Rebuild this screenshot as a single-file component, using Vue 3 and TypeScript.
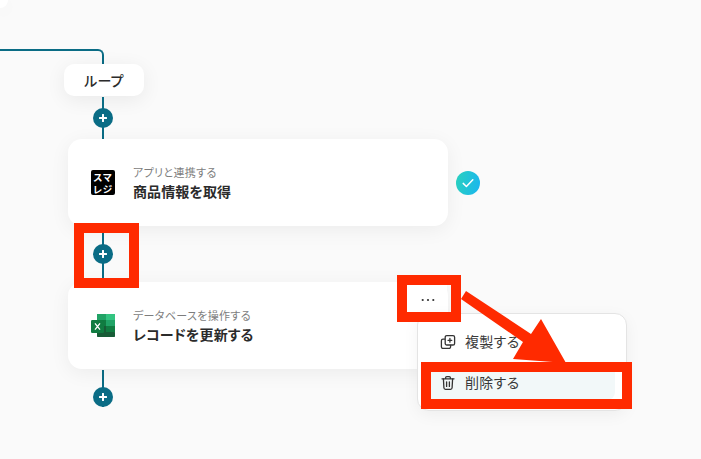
<script setup lang="ts">
interface MenuItem { label: string; icon: 'copy' | 'trash'; active: boolean }
const menuItems: MenuItem[] = [
  { label: '複製する', icon: 'copy', active: false },
  { label: '削除する', icon: 'trash', active: true },
]
</script>

<template>
  <div class="canvas">
    <div class="prev-node"></div>
    <div class="flow">
      <div class="branch"></div>
      <div class="pill">ループ</div>
      <div class="adder adder-a"><span class="plus"><svg width="8" height="8" viewBox="0 0 8 8"><path d="M4 .8v6.4M.8 4h6.4" stroke="#fff" stroke-width="2" stroke-linecap="round"/></svg></span></div>

      <div class="card">
        <div class="logo-sm"><span>スマ</span><span>レジ</span></div>
        <div class="texts">
          <div class="sub">アプリと連携する</div>
          <div class="title">商品情報を取得</div>
        </div>
        <span class="check">
          <svg width="14" height="14" viewBox="0 0 14 14"><path d="M2.2 7.4l3.2 3.1 6.4-6.8" fill="none" stroke="#fff" stroke-width="1.5" stroke-linecap="round" stroke-linejoin="round"/></svg>
        </span>
      </div>

      <div class="adder adder-b"><span class="plus"><svg width="8" height="8" viewBox="0 0 8 8"><path d="M4 .8v6.4M.8 4h6.4" stroke="#fff" stroke-width="2" stroke-linecap="round"/></svg></span></div>

      <div class="card">
        <svg class="logo-xl" width="24" height="24" viewBox="0 0 24 24">
          <rect x="6" y="0" width="18" height="23" rx="1.5" fill="#21a366"/>
          <rect x="15" y="0" width="9" height="6" fill="#33c481"/>
          <rect x="6" y="0" width="9" height="6" fill="#21a366"/>
          <rect x="6" y="6" width="9" height="6" fill="#107c41"/>
          <rect x="15" y="6" width="9" height="6" fill="#21a366"/>
          <rect x="6" y="12" width="9" height="6" fill="#185c37"/>
          <rect x="15" y="12" width="9" height="6" fill="#107c41"/>
          <rect x="6" y="18" width="18" height="5" rx="1" fill="#185c37"/>
          <rect x="0" y="6" width="13" height="13" rx="1.2" fill="#107c41"/>
          <path d="M4 9.4l5 6.2M9 9.4l-5 6.2" stroke="#fff" stroke-width="1.3" fill="none"/>
        </svg>
        <div class="texts">
          <div class="sub">データベースを操作する</div>
          <div class="title">レコードを更新する</div>
        </div>
        <button class="more" type="button">
          <svg width="14" height="4" viewBox="0 0 14 4"><circle cx="1.7" cy="2" r="1.1" fill="#333"/><circle cx="7" cy="2" r="1.1" fill="#333"/><circle cx="12.3" cy="2" r="1.1" fill="#333"/></svg>
        </button>
      </div>

      <div class="adder adder-c"><span class="plus"><svg width="8" height="8" viewBox="0 0 8 8"><path d="M4 .8v6.4M.8 4h6.4" stroke="#fff" stroke-width="2" stroke-linecap="round"/></svg></span></div>
    </div>

    <div class="menu">
      <div v-for="item in menuItems" :key="item.label" class="menu-row" :class="{ active: item.active }">
        <svg v-if="item.icon === 'copy'" width="16" height="16" viewBox="0 0 16 16" fill="none" stroke="#333" stroke-width="1.3" stroke-linejoin="round" stroke-linecap="round">
          <path d="M4.6 5.2H3a1.6 1.6 0 0 0-1.6 1.6v6A1.6 1.6 0 0 0 3 14.4h6a1.6 1.6 0 0 0 1.6-1.6v-1.4"/>
          <rect x="5.2" y="1.6" width="9.4" height="9.4" rx="1.6"/>
          <path d="M9.9 4.4v3.8M8 6.3h3.8"/>
        </svg>
        <svg v-else width="16" height="16" viewBox="0 0 16 16" fill="none" stroke="#333" stroke-width="1.3" stroke-linejoin="round" stroke-linecap="round">
          <path d="M2 3.8h12M5.6 3.6V2.8a1.2 1.2 0 0 1 1.2-1.2h2.4a1.2 1.2 0 0 1 1.2 1.2v.8"/>
          <path d="M3.4 3.8l.5 9a1.6 1.6 0 0 0 1.6 1.5h5a1.6 1.6 0 0 0 1.6-1.5l.5-9"/>
          <path d="M6.6 6.8v4.6M9.4 6.8v4.6"/>
        </svg>
        <span class="menu-label">{{ item.label }}</span>
      </div>
    </div>

    <svg class="arrow" width="701" height="459" viewBox="0 0 701 459">
      <path d="M466 291L531 334L541 319L566 363L513 359L523 342L461 299Z" fill="#ff2a00"/>
    </svg>
    <div class="mark mark-a"></div>
    <div class="mark mark-b"></div>
    <div class="mark mark-c"></div>
  </div>
</template>

<style>
html, body { margin: 0; padding: 0; }
</style>

<style scoped>
.canvas {
  position: relative;
  width: 701px;
  height: 459px;
  overflow: hidden;
  background: #fafafa;
  font-family: "Noto Sans CJK JP", "Noto Sans", sans-serif;
  font-feature-settings: "palt";
  color: #2b2b2b;
}
.prev-node {
  position: absolute;
  left: 0;
  top: 0;
  width: 8px;
  height: 8px;
  background: #fff;
  border-bottom-right-radius: 10px;
  box-shadow: 0 4px 16px rgba(0, 0, 0, 0.06);
}
.flow {
  display: flex;
  flex-direction: column;
  align-items: flex-start;
  padding-top: 49px;
}
.branch {
  box-sizing: border-box;
  width: 104px;
  height: 15px;
  border-top: 2px solid #0a6c85;
  border-right: 2px solid #0a6c85;
  border-top-right-radius: 6px;
}
.pill {
  display: flex;
  align-items: center;
  justify-content: center;
  width: 80px;
  height: 32px;
  margin-left: 64px;
  background: #fff;
  border-radius: 10px;
  box-shadow: 0 4px 20px rgba(0, 0, 0, 0.07);
  font-size: 14px;
  line-height: 20px;
  font-weight: 500;
  letter-spacing: 0.2px;
}
.adder {
  display: flex;
  flex-direction: column;
  align-items: center;
  width: 20px;
  margin-left: 93px;
  background: linear-gradient(#0a6c85, #0a6c85) center top 1px / 2px 100% no-repeat;
}
.adder-a { height: 43px; padding-top: 12px; box-sizing: border-box; }
.adder-b { height: 56px; padding-top: 18px; box-sizing: border-box; }
.adder-c { height: 38px; padding-top: 18px; box-sizing: border-box; }
.plus {
  display: flex;
  align-items: center;
  justify-content: center;
  width: 20px;
  height: 20px;
  border-radius: 50%;
  background: #0a6c85;
}
.card {
  position: relative;
  display: flex;
  align-items: center;
  box-sizing: border-box;
  width: 380px;
  height: 87px;
  margin-left: 68px;
  padding-left: 23px;
  background: #fff;
  border-radius: 14px;
  box-shadow: 0 4px 20px rgba(0, 0, 0, 0.06);
}
.logo-sm {
  display: flex;
  flex-direction: column;
  align-items: center;
  justify-content: center;
  flex: none;
  width: 24px;
  height: 25px;
  background: #000;
  border-radius: 2px;
  color: #fff;
  font-size: 9.5px;
  font-weight: 700;
  line-height: 12px;
  letter-spacing: 0.8px;
}
.logo-xl { flex: none; }
.texts {
  display: flex;
  flex-direction: column;
  gap: 1px;
  margin-bottom: 1px;
  margin-left: 18px;
}
.sub {
  font-size: 11px;
  line-height: 16px;
  letter-spacing: 0.35px;
  color: #7d7d7d;
}
.title {
  font-size: 14px;
  line-height: 20px;
  letter-spacing: 0.1px;
  font-weight: 700;
  color: #2b2b2b;
}
.check {
  position: absolute;
  left: 388px;
  top: 32px;
  display: flex;
  align-items: center;
  justify-content: center;
  width: 24px;
  height: 24px;
  border-radius: 50%;
  background: linear-gradient(100deg, #2ad1bd, #19b5f1);
}
.more {
  position: absolute;
  right: 1px;
  top: 3px;
  display: flex;
  align-items: center;
  justify-content: center;
  box-sizing: border-box;
  width: 44px;
  height: 30px;
  padding: 0 0 0 6px;
  border: 0;
  background: #fff;
}
.menu {
  position: absolute;
  left: 417px;
  top: 313px;
  box-sizing: border-box;
  display: flex;
  flex-direction: column;
  gap: 5px;
  width: 210px;
  height: 98px;
  padding: 9px 11px 10px 7px;
  background: #fff;
  border: 1px solid #e4e4e4;
  border-radius: 12px;
  box-shadow: 0 4px 16px rgba(0, 0, 0, 0.05);
}
.menu-row {
  display: flex;
  align-items: center;
  gap: 9px;
  height: 36px;
  flex: none;
  padding-left: 15px;
  border-radius: 8px;
  font-size: 14px;
  letter-spacing: 0.3px;
  color: #3a3a3a;
}
.menu-row svg { margin-top: 2px; }
.menu-row.active { background: #f2f8f9; }
.arrow {
  position: absolute;
  left: 0;
  top: 0;
  pointer-events: none;
}
.mark {
  position: absolute;
  box-sizing: border-box;
  border: 10px solid #ff2a00;
}
.mark-a { left: 74px; top: 223px; width: 65px; height: 65px; }
.mark-b { left: 397px; top: 275px; width: 64px; height: 47px; }
.mark-c { left: 421px; top: 362px; width: 211px; height: 47px; }
</style>
